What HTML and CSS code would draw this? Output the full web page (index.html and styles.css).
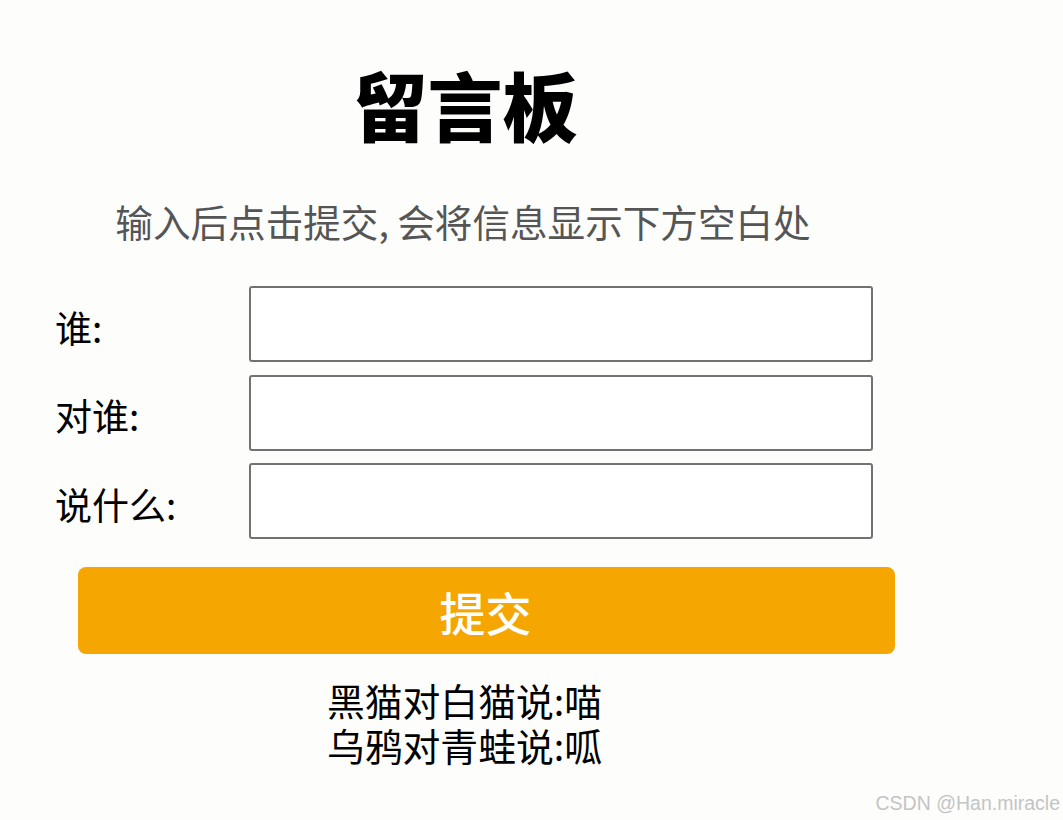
FILE: index.html
```html
<!DOCTYPE html>
<html lang="zh-CN">
<head>
<meta charset="utf-8">
<title>留言板</title>
<link rel="stylesheet" href="styles.css">
</head>
<body>
<div class="board">
  <h1 class="title">留言板</h1>
  <p class="hint">输入后点击提交, 会将信息显示下方空白处</p>
  <div class="form">
    <div class="row"><span class="label">谁:</span><input class="field" type="text"></div>
    <div class="row"><span class="label">对谁:</span><input class="field" type="text"></div>
    <div class="row"><span class="label">说什么:</span><input class="field" type="text"></div>
  </div>
  <button class="submit" type="button">提交</button>
  <div class="messages">
    <div class="msg">黑猫对白猫说:喵</div>
    <div class="msg">乌鸦对青蛙说:呱</div>
  </div>
</div>
<div class="watermark">CSDN @Han.miracle</div>
</body>
</html>
```
FILE: styles.css
```css
html, body {
  margin: 0;
  padding: 0;
  background: #fdfdfc;
}
body {
  font-family: "Noto Sans CJK SC", "Noto Sans", sans-serif;
  color: #000;
  min-height: 820px;
  position: relative;
}
.board {
  width: 820px;
  margin-left: 55px;
  padding-top: 52px;
  display: flex;
  flex-direction: column;
}
.title {
  margin: 0;
  font-size: 75px;
  line-height: 104px;
  font-weight: 900;
  text-align: center;
}
.hint {
  margin: 42px 0 0;
  font-size: 37.6px;
  line-height: 45px;
  color: #555;
  text-align: center;
  padding-right: 4px;
}
.form {
  margin-top: 43px;
  display: flex;
  flex-direction: column;
  gap: 12.5px;
}
.row {
  display: flex;
  align-items: center;
  height: 76px;
}
.label {
  width: 194px;
  font-size: 37px;
  line-height: 45px;
  padding-top: 6px;
}
.field {
  box-sizing: border-box;
  width: 624px;
  height: 76px;
  margin: 0;
  border: 2px solid #727272;
  border-radius: 3px;
  background: #fff;
  font-size: 30px;
  padding: 0 8px;
}
.submit {
  margin: 28px 0 0 23px;
  width: 817px;
  height: 87px;
  border: none;
  border-radius: 8px;
  background: #f6a600;
  color: #fff;
  font-family: "Noto Sans CJK SC", sans-serif;
  font-size: 46px;
  font-weight: 500;
  padding: 0;
  padding-right: 2px;
}
.messages {
  margin-top: 23px;
  text-align: center;
  font-size: 37.8px;
  line-height: 45px;
  padding-right: 1px;
}
.watermark {
  position: absolute;
  right: 3px;
  top: 792px;
  font-family: "Liberation Sans", Arial, sans-serif;
  font-size: 19.5px;
  color: #c4c4c4;
}
```
